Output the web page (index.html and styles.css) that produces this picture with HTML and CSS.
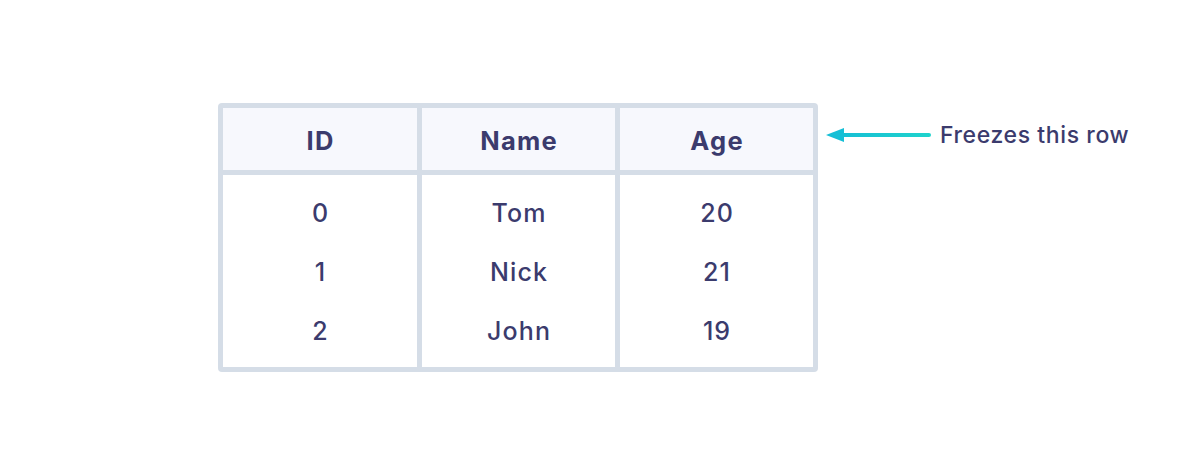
FILE: index.html
```html
<!DOCTYPE html>
<html>
<head>
<meta charset="utf-8">
<link rel="stylesheet" href="styles.css">
</head>
<body>
<main class="stage">
  <div class="grid">
    <div class="head">ID</div>
    <div class="head">Name</div>
    <div class="head">Age</div>
    <div class="col"><div class="cell">0</div><div class="cell">1</div><div class="cell">2</div></div>
    <div class="col"><div class="cell">Tom</div><div class="cell">Nick</div><div class="cell">John</div></div>
    <div class="col"><div class="cell">20</div><div class="cell">21</div><div class="cell">19</div></div>
  </div>
  <div class="note">
    <svg class="arrow" width="106" height="16" viewBox="0 0 106 16">
      <defs>
        <linearGradient id="g" gradientUnits="userSpaceOnUse" x1="0" x2="106" y1="8" y2="8">
          <stop offset="0" stop-color="#14bcd6"/>
          <stop offset="1" stop-color="#1fd3cc"/>
        </linearGradient>
      </defs>
      <line x1="14" y1="8" x2="103" y2="8" stroke="url(#g)" stroke-width="4" stroke-linecap="round"/>
      <polygon points="0,8 18,1 18,15" fill="#15bfd6"/>
    </svg>
    <span class="label">Freezes this row</span>
  </div>
</main>
</body>
</html>
```

FILE: styles.css
```css
html, body {
  margin: 0;
  padding: 0;
  background: #ffffff;
}
body {
  width: 1200px;
  height: 475px;
  overflow: hidden;
  font-family: "Inter", "Lato", sans-serif;
  color: #3b3b6d;
}
.stage {
  display: flex;
  align-items: flex-start;
  padding: 103px 0 0 218px;
}
.grid {
  display: grid;
  grid-template-columns: 194px 193px 193px;
  grid-template-rows: 62px 192px;
  gap: 5px;
  padding: 5px;
  background: #d5dde7;
  border-radius: 4px;
}
.head {
  background: #f7f8fd;
  display: flex;
  align-items: center;
  justify-content: center;
  font-weight: 700;
  font-size: 25.5px;
  letter-spacing: 1.3px;
  text-indent: 1.3px;
  padding-top: 3px;
}
.col {
  background: #ffffff;
  display: flex;
  flex-direction: column;
  padding: 9px 0 7px;
}
.cell {
  height: 59px;
  display: flex;
  align-items: center;
  justify-content: center;
  font-size: 25px;
  font-weight: 500;
  letter-spacing: 1.1px;
  text-indent: 1.1px;
}
.note {
  display: flex;
  align-items: center;
  margin: 18px 0 0 8px;
  gap: 8px;
}
.arrow {
  display: block;
}
.label {
  font-size: 23px;
  font-weight: 500;
  letter-spacing: 0.6px;
}
```
